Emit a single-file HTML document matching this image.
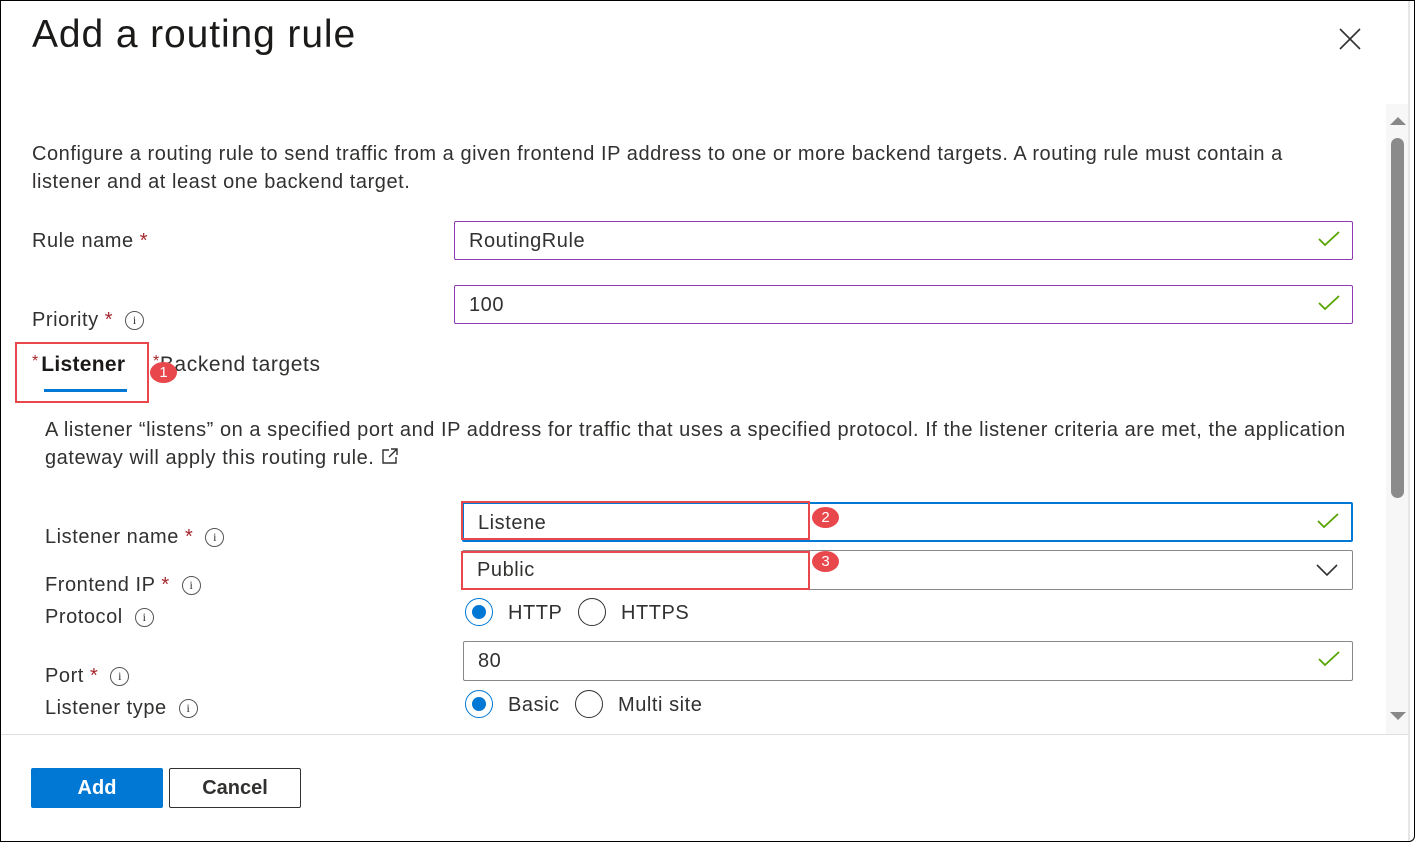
<!DOCTYPE html>
<html><head><style>
*{box-sizing:border-box;margin:0;padding:0}
body{width:1415px;height:842px;position:relative;overflow:hidden;background:#fff;font-family:"Liberation Sans",sans-serif;color:#323130}
.a{position:absolute;white-space:nowrap}
.t{font-size:20px;letter-spacing:0.55px}
.req{color:#a4262c}
.info{display:inline-block;width:19px;height:19px;border:1.3px solid #555;border-radius:50%;font-size:12px;text-align:center;line-height:17px;vertical-align:middle;margin-left:12px;font-family:"Liberation Serif",serif;letter-spacing:0}
.inp{position:absolute;border:1px solid #8a8886;border-radius:2px;height:40px}
.chk{position:absolute;right:12px;top:8px}
.rad{position:absolute;width:28px;height:28px;border-radius:50%;border:1.3px solid #323130}
.rad.on{border-color:#0078d4}
.rad.on::after{content:"";position:absolute;left:6px;top:6px;width:14px;height:14px;border-radius:50%;background:#0078d4}
.red{position:absolute;border:2px solid #e8474c}
.badge{position:absolute;width:27px;height:21px;border-radius:50%;background:#e8474c;color:#fff;font-size:15px;text-align:center;line-height:21px}
</style></head><body>
<div style="position:absolute;inset:0;border:1px solid #000;border-radius:0 0 6px 0"></div>
<div style="position:absolute;left:1408px;top:1px;width:2px;height:840px;background:#e6e6e6"></div>
<div class="a" style="left:32px;top:13px;font-size:39px;letter-spacing:0.9px;color:#1b1a19">Add a routing rule</div>
<svg class="a" style="left:1339px;top:28px" width="22" height="22"><path d="M1 1L21 21M21 1L1 21" stroke="#323130" stroke-width="1.6"/></svg>
<div style="position:absolute;left:1386px;top:104px;width:22px;height:630px;background:#f7f7f7"></div>
<svg class="a" style="left:1390px;top:116px" width="16" height="10"><path d="M0 9L8 1L16 9Z" fill="#888"/></svg>
<div style="position:absolute;left:1391px;top:138px;width:13px;height:360px;background:#8b8b8b;border-radius:7px"></div>
<svg class="a" style="left:1390px;top:711px" width="16" height="10"><path d="M0 1L8 9L16 1Z" fill="#888"/></svg>

<div class="a t" style="left:32px;top:140px;line-height:28px;white-space:normal;width:1320px">Configure a routing rule to send traffic from a given frontend IP address to one or more backend targets. A routing rule must contain a listener and at least one backend target.</div>
<div class="a t" style="left:32px;top:230px">Rule name <span class="req">*</span></div>
<div class="inp" style="left:454px;top:221px;width:899px;height:39px;border-color:#8e3ab5"><div class="a t" style="left:14px;top:8px">RoutingRule</div><svg class="chk" width="22" height="18"><path d="M1 9L7 15L21 2" stroke="#57a300" stroke-width="1.8" fill="none"/></svg></div>
<div class="a t" style="left:32px;top:309px">Priority <span class="req">*</span><span class="info">i</span></div>
<div class="inp" style="left:454px;top:285px;width:899px;height:39px;border-color:#8e3ab5"><div class="a t" style="left:14px;top:8px">100</div><svg class="chk" width="22" height="18"><path d="M1 9L7 15L21 2" stroke="#57a300" stroke-width="1.8" fill="none"/></svg></div>

<div class="a" style="left:32px;top:353px;font-size:21px;color:#1b1a19"><span class="req" style="font-size:16px;vertical-align:top;margin-right:3px">*</span><b style="font-weight:600;letter-spacing:0.3px">Listener</b></div>
<div style="position:absolute;left:44px;top:389px;width:83px;height:3px;background:#0078d4"></div>
<div class="a" style="left:153px;top:353px;font-size:21px;letter-spacing:0.6px"><span class="req" style="font-size:16px;vertical-align:top">*</span>Backend targets</div>
<div class="red" style="left:15px;top:342px;width:134px;height:61px"></div>
<div class="badge" style="left:150px;top:362px">1</div>

<div class="a t" style="left:45px;top:416px;line-height:28px;white-space:normal;width:1320px">A listener “listens” on a specified port and IP address for traffic that uses a specified protocol. If the listener criteria are met, the application gateway will apply this routing rule. <svg width="18" height="18" style="vertical-align:-1px"><path d="M8 3H2V16H15V10M10 2H16V8M16 2L8 10" stroke="#323130" stroke-width="1.4" fill="none"/></svg></div>

<div class="a t" style="left:45px;top:526px">Listener name <span class="req">*</span><span class="info">i</span></div>
<div class="inp" style="left:462px;top:502px;width:891px;border:2px solid #0078d4"><div class="a t" style="left:14px;top:8px">Listene</div><svg class="chk" width="22" height="18"><path d="M1 9L7 15L21 2" stroke="#57a300" stroke-width="1.8" fill="none"/></svg></div>
<div class="a t" style="left:45px;top:574px">Frontend IP <span class="req">*</span><span class="info">i</span></div>
<div class="inp" style="left:462px;top:550px;width:891px"><div class="a t" style="left:14px;top:8px">Public</div><svg class="a" style="right:14px;top:13px" width="22" height="13"><path d="M1 1L11 11L21 1" stroke="#323130" stroke-width="1.6" fill="none"/></svg></div>
<div class="red" style="left:461px;top:501px;width:349px;height:39px"></div>
<div class="badge" style="left:812px;top:507px">2</div>
<div class="red" style="left:461px;top:551px;width:349px;height:39px"></div>
<div class="badge" style="left:812px;top:551px">3</div>

<div class="a t" style="left:45px;top:606px">Protocol<span class="info">i</span></div>
<div class="rad on" style="left:465px;top:598px"></div><div class="a t" style="left:508px;top:602px">HTTP</div>
<div class="rad" style="left:578px;top:598px"></div><div class="a t" style="left:621px;top:602px">HTTPS</div>
<div class="a t" style="left:45px;top:665px">Port <span class="req">*</span><span class="info">i</span></div>
<div class="inp" style="left:463px;top:641px;width:890px"><div class="a t" style="left:14px;top:8px">80</div><svg class="chk" width="22" height="18"><path d="M1 9L7 15L21 2" stroke="#57a300" stroke-width="1.8" fill="none"/></svg></div>
<div class="a t" style="left:45px;top:697px">Listener type<span class="info">i</span></div>
<div class="rad on" style="left:465px;top:690px"></div><div class="a t" style="left:508px;top:694px">Basic</div>
<div class="rad" style="left:575px;top:690px"></div><div class="a t" style="left:618px;top:694px">Multi site</div>

<div style="position:absolute;left:1px;top:734px;width:1407px;height:1px;background:#e1dfdd"></div>
<div class="a" style="left:31px;top:768px;width:132px;height:40px;background:#0078d4;color:#fff;font-size:20px;font-weight:bold;text-align:center;line-height:40px;border-radius:2px">Add</div>
<div class="a" style="left:169px;top:768px;width:132px;height:40px;border:1px solid #323130;font-size:20px;font-weight:bold;text-align:center;line-height:38px;border-radius:2px">Cancel</div>
</body></html>
